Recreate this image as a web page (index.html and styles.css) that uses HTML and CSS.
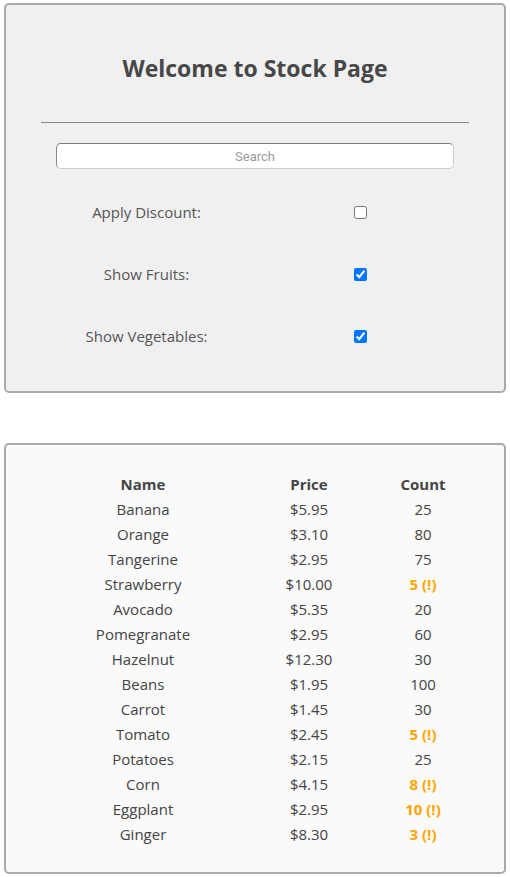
FILE: index.html
```html
<!DOCTYPE html>
<html lang="en">
<head>
<meta charset="utf-8">
<title>Stock Page</title>
<link rel="stylesheet" href="styles.css">
</head>
<body>
<section class="panel filters">
  <h1 class="title">Welcome to Stock Page</h1>
  <hr class="rule">
  <input class="search" type="text" placeholder="Search">
  <div class="options">
    <label class="opt-label" for="discount">Apply Discount:</label>
    <div class="opt-box"><input id="discount" type="checkbox"></div>
    <label class="opt-label" for="fruits">Show Fruits:</label>
    <div class="opt-box"><input id="fruits" type="checkbox" checked></div>
    <label class="opt-label" for="veg">Show Vegetables:</label>
    <div class="opt-box"><input id="veg" type="checkbox" checked></div>
  </div>
</section>
<section class="panel stock">
  <div class="table">
    <div class="th">Name</div><div class="th">Price</div><div class="th">Count</div>
    <div>Banana</div><div>$5.95</div><div>25</div>
    <div>Orange</div><div>$3.10</div><div>80</div>
    <div>Tangerine</div><div>$2.95</div><div>75</div>
    <div>Strawberry</div><div>$10.00</div><div class="low">5 (!)</div>
    <div>Avocado</div><div>$5.35</div><div>20</div>
    <div>Pomegranate</div><div>$2.95</div><div>60</div>
    <div>Hazelnut</div><div>$12.30</div><div>30</div>
    <div>Beans</div><div>$1.95</div><div>100</div>
    <div>Carrot</div><div>$1.45</div><div>30</div>
    <div>Tomato</div><div>$2.45</div><div class="low">5 (!)</div>
    <div>Potatoes</div><div>$2.15</div><div>25</div>
    <div>Corn</div><div>$4.15</div><div class="low">8 (!)</div>
    <div>Eggplant</div><div>$2.95</div><div class="low">10 (!)</div>
    <div>Ginger</div><div>$8.30</div><div class="low">3 (!)</div>
  </div>
</section>
</body>
</html>
```
FILE: styles.css
```css
body {
  margin: 3px 4px;
  font-family: "Open Sans", "Noto Sans", sans-serif;
  color: #444;
  background: #fff;
}
.panel {
  border: 2px solid #aaa;
  border-radius: 5px;
  box-sizing: border-box;
}
.filters {
  background: #f0f0f0;
  padding: 47px 35px 24px;
  display: flex;
  flex-direction: column;
}
.title {
  margin: 0;
  font-size: 23px;
  line-height: 32px;
  font-weight: 700;
  text-align: center;
  color: #474747;
}
.rule {
  margin: 38px 0 0;
  border: 0;
  height: 1px;
  background: #888;
}
.search {
  margin: 20px 15px 0;
  height: 26px;
  box-sizing: border-box;
  border: 1px solid #ccc;
  border-top-color: #7a7a7a;
  border-left-color: #8a8a8a;
  border-radius: 5px;
  background: #fff;
  text-align: center;
  font-family: Roboto, "Liberation Sans", sans-serif;
  font-size: 13px;
  padding: 0;
}
.search::placeholder {
  color: #9a9a9a;
}
.options {
  margin-top: 12px;
  display: grid;
  grid-template-columns: 1fr 1fr;
  grid-auto-rows: 62px;
  align-items: center;
  justify-items: center;
}
.opt-label {
  font-size: 15px;
  color: #555;
  margin-left: -3px;
}
.opt-box {
  display: flex;
  margin-left: -3px;
}
.opt-box input {
  margin: 0;
  width: 13px;
  height: 13px;
}
.stock {
  margin-top: 50px;
  background: #fafafa;
  padding: 26px 0 26px 50px;
}
.table {
  display: grid;
  grid-template-columns: 174px 158px 70px;
  grid-auto-rows: 25px;
  align-items: center;
  justify-items: center;
  font-size: 15px;
}
.th {
  font-weight: 700;
}
.low {
  color: #ffa500;
  font-weight: 700;
}
```
